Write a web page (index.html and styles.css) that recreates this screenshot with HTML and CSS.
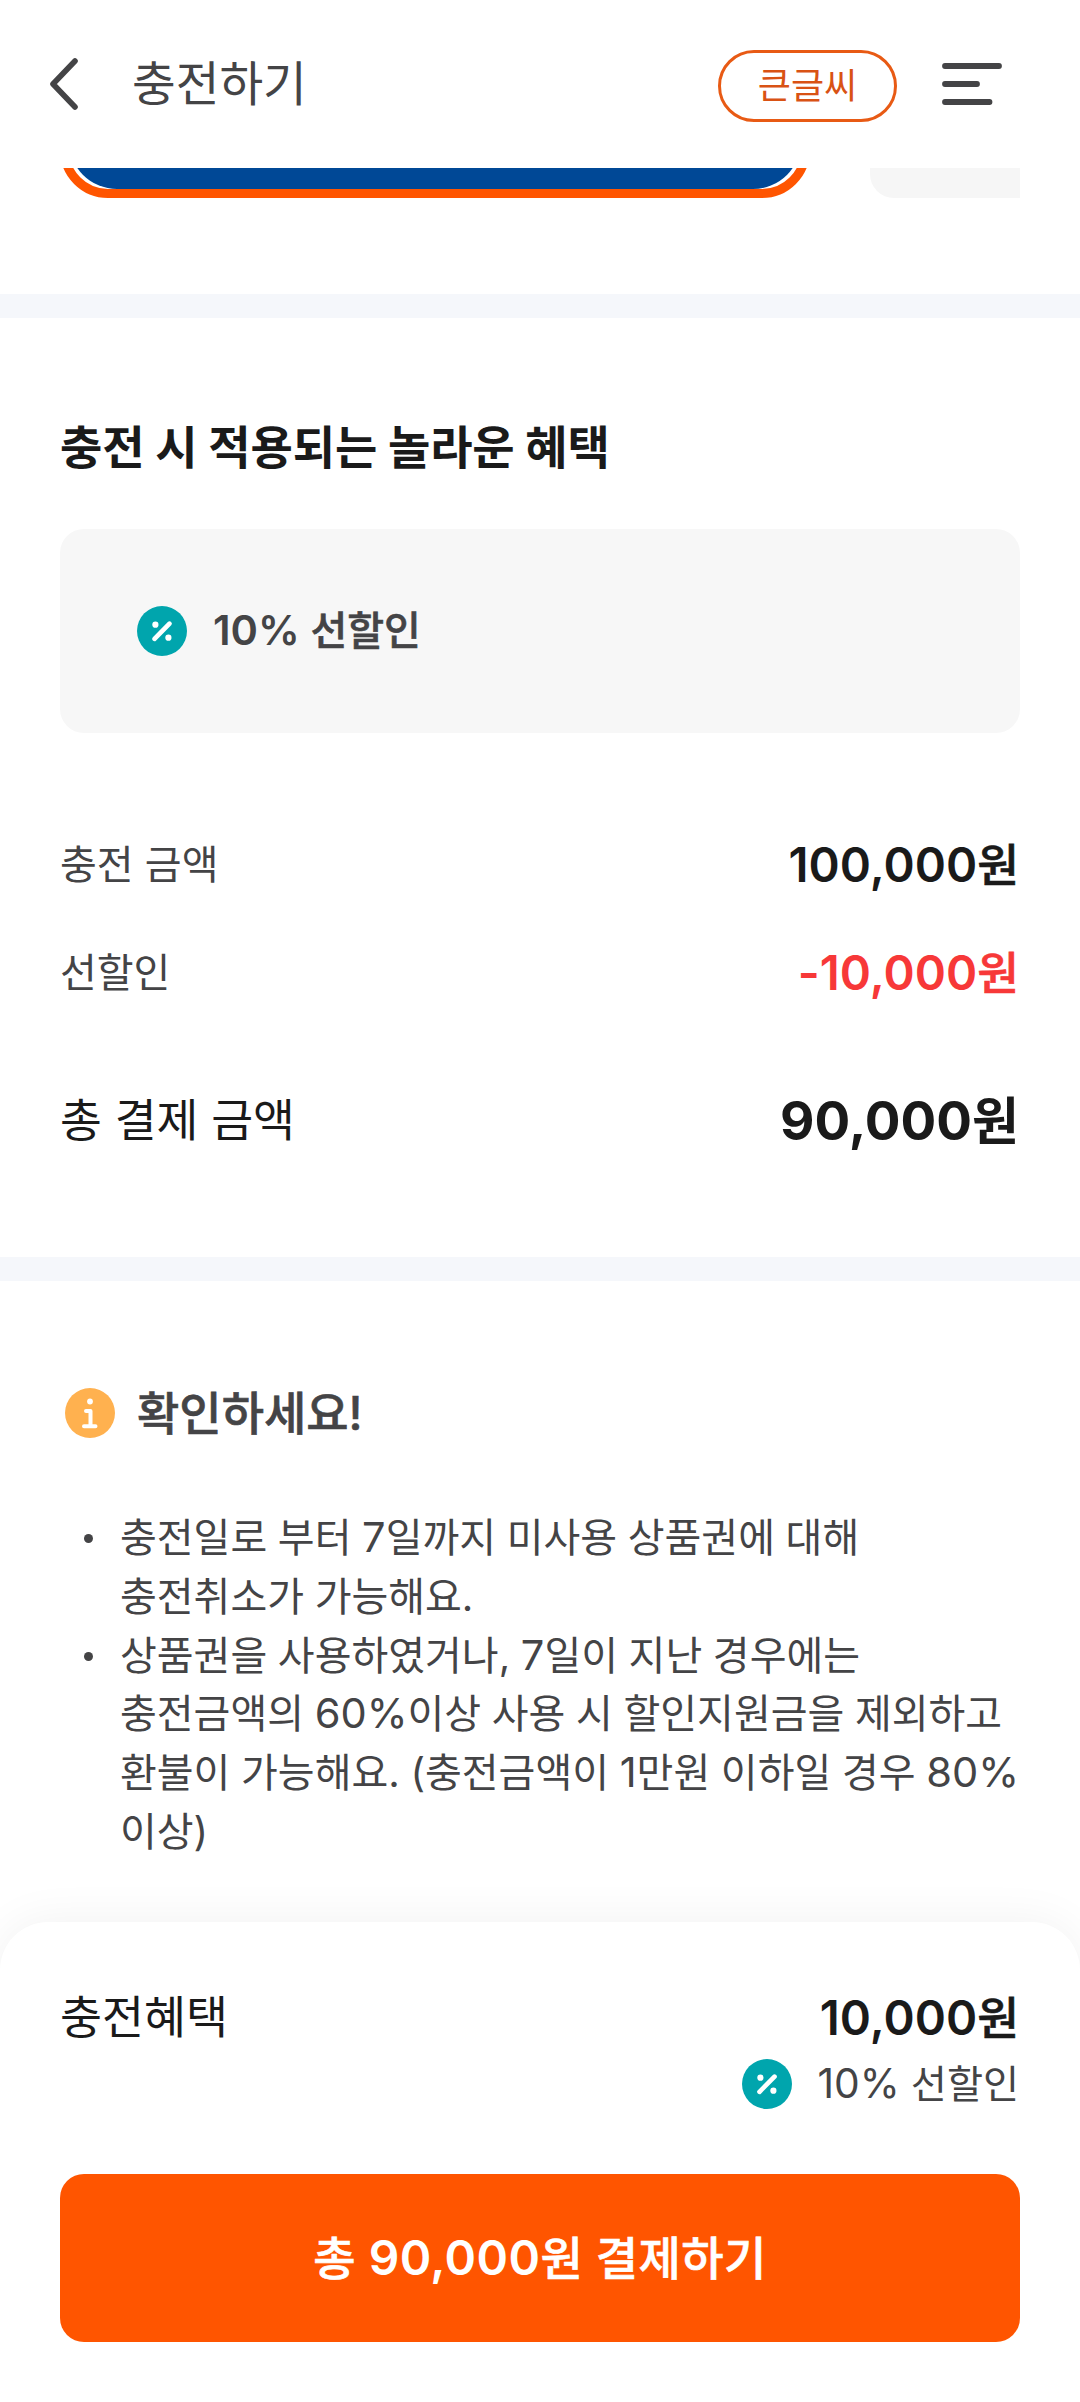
FILE: index.html
```html
<!DOCTYPE html>
<html lang="ko">
<head>
<meta charset="utf-8">
<meta name="viewport" content="width=device-width, initial-scale=1">
<title>충전하기</title>
<link rel="stylesheet" href="styles.css">
</head>
<body>
<div class="screen">
  <header class="topbar">
    <svg class="icon-back" viewBox="0 0 30 52" fill="none" stroke="#444446" stroke-width="5.600" stroke-linecap="round" stroke-linejoin="round"><path d="M26 3 4 26l22 23"/></svg>
    <h1 class="topbar-title">충전하기</h1>
    <button class="big-text" type="button">큰글씨</button>
    <svg class="icon-menu" viewBox="0 0 60 42" fill="none" stroke="#444446" stroke-width="5.800" stroke-linecap="round"><path d="M3 3h54M3 21h32M3 39h44.500"/></svg>
  </header>

  <main class="content">
    <section class="cards">
      <div class="card card-selected"><div class="card-face"></div></div>
      <div class="card card-next"></div>
    </section>

    <section class="benefit">
      <h2 class="benefit-title">충전 시 적용되는 놀라운 혜택</h2>
      <div class="benefit-box">
        <svg class="icon-percent" viewBox="0 0 50 50"><circle cx="25" cy="25" r="25" fill="#00a5ad"/><path d="M17.500 32.800 32.500 17.700" stroke="#fff" stroke-width="4.700" stroke-linecap="round"/><circle cx="18.400" cy="18.700" r="3.100" fill="#fff"/><circle cx="31.400" cy="31.700" r="3.100" fill="#fff"/></svg>
        <span class="benefit-name"><span class="num">10%</span> 선할인</span>
      </div>
      <dl class="amounts">
        <div class="amount-row">
          <dt class="amount-label">충전 금액</dt>
          <dd class="amount-value"><span class="num">100,000</span>원</dd>
        </div>
        <div class="amount-row">
          <dt class="amount-label">선할인</dt>
          <dd class="amount-value amount-discount"><span class="num">-10,000</span>원</dd>
        </div>
        <div class="amount-row amount-total">
          <dt class="amount-label">총 결제 금액</dt>
          <dd class="amount-value"><span class="num">90,000</span>원</dd>
        </div>
      </dl>
    </section>

    <section class="notice">
      <div class="notice-head">
        <svg class="icon-info" viewBox="0 0 50 50"><circle cx="25" cy="25" r="25" fill="#ffb14f"/><circle cx="25" cy="13.500" r="2.900" fill="#fff"/><path d="M21 23h4.500v15M19 38.300h11.500" fill="none" stroke="#fff" stroke-width="4" stroke-linecap="round" stroke-linejoin="round"/></svg>
        <h2 class="notice-title">확인하세요!</h2>
      </div>
      <ul class="notice-list">
        <li>충전일로 부터 <span class="num">7</span>일까지 미사용 상품권에 대해<br>충전취소가 가능해요.</li>
        <li>상품권을 사용하였거나, <span class="num">7</span>일이 지난 경우에는<br>충전금액의 <span class="num">60%</span>이상 사용 시 할인지원금을 제외하고<br>환불이 가능해요. (충전금액이 <span class="num">1</span>만원 이하일 경우 <span class="num">80%</span><br>이상)</li>
      </ul>
    </section>
  </main>

  <footer class="sheet">
    <div class="sheet-row">
      <span class="sheet-label">충전혜택</span>
      <div class="sheet-benefit">
        <strong class="sheet-amount"><span class="num">10,000</span>원</strong>
        <div class="sheet-detail">
          <svg class="icon-percent" viewBox="0 0 50 50"><circle cx="25" cy="25" r="25" fill="#00a5ad"/><path d="M17.500 32.800 32.500 17.700" stroke="#fff" stroke-width="4.700" stroke-linecap="round"/><circle cx="18.400" cy="18.700" r="3.100" fill="#fff"/><circle cx="31.400" cy="31.700" r="3.100" fill="#fff"/></svg>
          <span><span class="num">10%</span> 선할인</span>
        </div>
      </div>
    </div>
    <button class="pay" type="button">총 <span class="num">90,000</span>원 결제하기</button>
  </footer>
</div>
</body>
</html>
```
FILE: styles.css
```css
* {
  box-sizing: border-box;
  margin: 0;
  padding: 0;
}

body {
  background: #fff;
  color: #444446;
  font-family: Inter, "Noto Sans CJK KR", sans-serif;
}

button {
  font-family: inherit;
}

/* Latin digits are set slightly larger than the Hangul beside them */
.num {
  font-size: 1.04em;
  line-height: 0;
}

.screen {
  display: flex;
  flex-direction: column;
  width: 1080px;
  height: 2402px;
  overflow: hidden;
}

/* Top bar */
.topbar {
  display: flex;
  flex: none;
  align-items: center;
  height: 168px;
  padding: 0 78px 0 49px;
}

.icon-back {
  width: 30px;
  height: 52px;
}

.topbar-title {
  margin-left: 53px;
  font-size: 47.500px;
  font-weight: 400;
  line-height: 60px;
}

.big-text {
  width: 179px;
  height: 72px;
  margin: 4px 45px 0 auto;
  border: 3px solid #e85a14;
  border-radius: 36px;
  background: none;
  color: #d95214;
  font-size: 36px;
  line-height: 60px;
}

.icon-menu {
  width: 60px;
  height: 42px;
}

/* Scrolling content */
.content {
  flex: 1;
  min-height: 0;
}

.cards {
  display: flex;
  gap: 60px;
  height: 126px;
  margin: 0 60px;
  overflow: hidden;
}

.card {
  flex: none;
  align-self: flex-start;
  height: 400px;
  margin-top: -370px;
}

.card-selected {
  width: 750px;
  border: 9px solid #ff5500;
  border-radius: 48px;
}

.card-face {
  height: 100%;
  border-radius: 48px;
  background: #004896;
}

.card-next {
  width: 750px;
  border-radius: 24px;
  background: #f6f6f6;
}

.benefit {
  height: 987px;
  padding: 98px 60px 0;
  border-top: 24px solid #f5f7fb;
  border-bottom: 24px solid #f5f7fb;
}

.benefit-title {
  color: #1a1a1a;
  font-size: 46px;
  font-weight: 700;
  letter-spacing: -0.100px;
  line-height: 62px;
}

.benefit-box {
  display: flex;
  align-items: center;
  height: 204px;
  margin-top: 51px;
  padding-left: 77px;
  border-radius: 24px;
  background: #f7f7f7;
}

.icon-percent {
  width: 50px;
  height: 50px;
}

.benefit-name {
  margin-left: 26px;
  font-size: 40px;
  line-height: 58px;
}

/* Semibold Hangul: the medium cut, thickened by a hairline stroke */
.benefit-name,
.amount-value,
.notice-title,
.sheet-amount,
.pay {
  font-weight: 500;
  -webkit-text-stroke: 0.6px currentColor;
}

.benefit-name .num,
.amount-value .num,
.sheet-amount .num,
.pay .num {
  font-weight: 600;
  -webkit-text-stroke: 0;
}

.amounts {
  display: flex;
  flex-direction: column;
  gap: 48px;
  margin-top: 102px;
}

.amount-row {
  display: flex;
  align-items: center;
  justify-content: space-between;
  height: 60px;
  padding-right: 1px;
}

.amount-label {
  font-size: 40px;
  line-height: 60px;
}

.amount-value {
  padding-top: 2px;
  color: #1a1a1a;
  font-size: 45.500px;
  line-height: 60px;
}

.amount-discount {
  color: #f73838;
}

.amount-total {
  margin-top: 40px;
}

.amount-total .amount-label {
  color: #1a1a1a;
  font-size: 45.500px;
}

.amount-total .amount-value,
.amount-total .num {
  font-weight: 700;
  -webkit-text-stroke: 0;
}

.amount-total .amount-value {
  font-size: 51px;
}

/* Notice */
.notice {
  padding: 102px 60px 0;
}

.notice-head {
  display: flex;
  gap: 22px;
  align-items: center;
  height: 60px;
  padding-left: 5px;
}

.icon-info {
  width: 50px;
  height: 50px;
}

.notice-title {
  font-size: 46px;
  line-height: 60px;
}

.notice-list {
  margin-top: 66px;
  padding-left: 60px;
  font-size: 40px;
  line-height: 58.800px;
  list-style: none;
  white-space: nowrap;
  word-spacing: -0.600px;
}

.notice-list li {
  position: relative;
}

.notice-list li::before {
  position: absolute;
  top: 25px;
  left: -36px;
  width: 9px;
  height: 9px;
  border-radius: 50%;
  background: #444446;
  content: "";
}

/* Bottom sheet */
.sheet {
  position: relative;
  flex: none;
  height: 480px;
  padding: 63px 60px 0;
  border-radius: 48px 48px 0 0;
  background: #fff;
  box-shadow: 0 0 48px rgba(0, 0, 0, 0.06);
}

.sheet-row {
  display: flex;
  align-items: flex-start;
  justify-content: space-between;
  height: 189px;
  padding-right: 1px;
}

.sheet-label {
  color: #1a1a1a;
  font-size: 45.700px;
  line-height: 66px;
}

.sheet-benefit {
  display: flex;
  flex-direction: column;
  align-items: flex-end;
}

.sheet-amount {
  height: 66px;
  color: #1a1a1a;
  font-size: 45.500px;
  line-height: 68px;
}

.sheet-detail {
  display: flex;
  gap: 26px;
  align-items: center;
  height: 66px;
  font-size: 39.200px;
  line-height: 60px;
}

.pay {
  display: block;
  width: 100%;
  height: 168px;
  border: 0;
  border-radius: 24px;
  background: #ff5500;
  color: #fff;
  font-size: 46px;
  letter-spacing: 0.400px;
  line-height: 60px;
}
```
